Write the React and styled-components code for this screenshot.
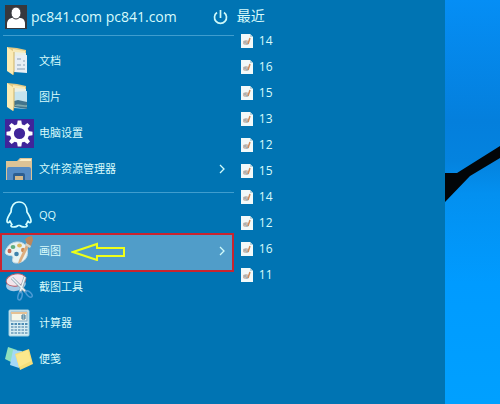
import React from 'react';
import styled, { createGlobalStyle } from 'styled-components';

const GlobalStyle = createGlobalStyle`
    * {
        box-sizing: border-box;
    }

    body {
        margin: 0;
        background-color: #0074b3;
        color: #d8fbfb;
        font-family: "Open Sans", "Noto Sans CJK SC", sans-serif;
    }

    button {
        border: none;
        padding: 0;
        background: none;
        color: inherit;
        font-family: inherit;
        cursor: pointer;
    }
`;

const UserIcon = () => (
    <svg width="22" height="24" viewBox="0 0 22 24" aria-hidden="true">
        <rect width="22" height="24" fill="#37383d" />
        <path d="M2 23v-4c0-4 3-6 5-6h8c3 0 5 2 5 6v4z" fill="#fff" />
        <ellipse cx="11" cy="8" rx="5" ry="6" fill="#fff" stroke="#37383d" />
    </svg>
);

const PowerIcon = () => (
    <svg width="15" height="16" viewBox="0 0 15 16" fill="none" stroke="#cdf8f8" strokeWidth="1.7" aria-hidden="true">
        <path d="M4 3.500a6 6 0 1 0 7 0M7.500 1v8" />
    </svg>
);

const FolderIcon = ({ picture }) => (
    <svg width="28" height="30" viewBox="0 0 28 30" aria-hidden="true">
        <path d="M2 1l10 1 9 2v17H2z" fill="#e3c983" />
        <path d="M8 3l12 2v18H8z" fill="#f6e9b8" />
        <path d="M9 6l12 1v18H9z" fill="#e9efe6" />
        <path d="M9 10l13-1v18l-13-1z" fill={picture ? '#c5e3ee' : '#e8eef4'} />
        {picture ? (
            <>
                <path d="M9 19l4-1 9 2v7l-13-2z" fill="#43748c" />
                <path d="M10 23c4-2 7 1 12 0v2l-12-1z" fill="#7fa9ad" />
            </>
        ) : (
            <path d="M12 13h4m2 2h2m-8 4h4m2 0h2m-8 4h8" stroke="#8a9fb4" />
        )}
        <path d="M2 1l7 5v19l-1 4-6-4z" fill="#fbebb4" />
        <path d="M9 6v19l-1 4" fill="none" stroke="#cdb36a" />
    </svg>
);

const teeth = [0, 45, 90, 135, 180, 225, 270, 315];

const GearIcon = () => (
    <svg width="29" height="29" viewBox="0 0 29 29" aria-hidden="true">
        <rect width="29" height="29" fill="#40259a" />
        <circle cx="14.5" cy="14.5" r="7.6" fill="none" stroke="#fff" strokeWidth="4" />
        {teeth.map((angle) => (
            <path key={angle} d="M12 6l.7-4.500h3.600l.7 4.500z" fill="#fff" transform={`rotate(${angle} 14.5 14.5)`} />
        ))}
    </svg>
);

const ExplorerIcon = () => (
    <svg width="28" height="24" viewBox="0 0 28 24" aria-hidden="true">
        <path d="M1 4h11l3-3h12v22H1z" fill="#dcc396" />
        <path d="M14 4l2-2h10v2z" fill="#faedc7" />
        <path d="M2 12q0-2 2-2h20q2 0 2 2v11H2z" fill="#548bc4" />
        <path d="M8 23v-5q0-2 2-2h8q2 0 2 2v5z" fill="#2c5e91" />
        <path d="M10 19h8v4h-8z" fill="#d4b88a" />
    </svg>
);

const QQIcon = () => (
    <svg width="28" height="30" viewBox="0 0 28 30" fill="none" stroke="#d5ffff" strokeWidth="1.7" strokeLinejoin="round" aria-hidden="true">
        <path d="M14 2C9 2 6 6 6 12c-2 3-4 6-4 9 0 2.500 2 2 3 0 .5 1.500 1 2.500 2 3.500-2 1-1 2.500 1 2.500 2 0 4 0 5-1.500h2c1 1.500 3 1.500 5 1.500s3-1.500 1-2.500c1-1 1.500-2 2-3.500 1 2 3 2.500 3 0 0-3-2-6-4-9 0-6-3-10-8-10z" />
    </svg>
);

const PaintIcon = () => (
    <svg width="30" height="30" viewBox="0 0 30 30" aria-hidden="true">
        <path d="M3 12c3-6 12-8 17-4 4 3 4 8 3 12-2 5-6 7-11 7-4 0-4-3-3-5 0-3-2-2-5-3-4-1-3-4-1-7z" fill="#e9f3f1" stroke="#c8dbe2" />
        <ellipse cx="5.500" cy="15" rx="2" ry="2.200" fill="#c36c58" />
        <ellipse cx="9" cy="11" rx="2.400" ry="1.900" fill="#5fae7e" />
        <ellipse cx="15.500" cy="9.500" rx="2.400" ry="1.900" fill="#dbb75c" />
        <ellipse cx="19" cy="14" rx="2" ry="2.300" fill="#cf8c52" />
        <circle cx="12.500" cy="18" r="2.300" fill="#3f83ac" />
        <path d="M26 8L17 26l-3 2 1-4 8-17z" fill="#dcae80" />
        <path d="M21 3l3-2 4-1 1 4-2 6-4-2z" fill="#bc875d" />
        <path d="M22 7l5 3-1 2-5-3z" fill="#d6d2c4" />
    </svg>
);

const SnipIcon = () => (
    <svg width="30" height="30" viewBox="0 0 30 30" aria-hidden="true">
        <ellipse cx="12" cy="13" rx="10" ry="6" fill="#a9cbe6" transform="rotate(-12 12 13)" />
        <ellipse cx="12" cy="8" rx="10" ry="6" fill="#f3e6ec" stroke="#b85a65" transform="rotate(-10 12 8)" />
        <path d="M8 6l14 14M21 5l-5 16" stroke="#91a8b6" strokeWidth="3" />
        <path d="M8 6l13 13M21 5l-5 15" stroke="#eef4f4" strokeWidth="1.500" />
        <ellipse cx="16" cy="24" rx="2" ry="4" fill="none" stroke="#4d9bd5" strokeWidth="1.500" transform="rotate(15 16 24)" />
        <ellipse cx="25" cy="22" rx="2" ry="4" fill="none" stroke="#4d9bd5" strokeWidth="1.500" transform="rotate(-45 25 22)" />
    </svg>
);

const keys = [0, 1, 2, 3, 4].flatMap((col) => [0, 1, 2, 3].map((row) => [col, row]));

const CalculatorIcon = () => (
    <svg width="22" height="28" viewBox="0 0 22 28" aria-hidden="true">
        <rect x="1" y="1" width="20" height="26" rx="1" fill="#d8edf2" stroke="#a0cfe1" />
        <rect x="3" y="3" width="16" height="9" fill="#f6f6e9" stroke="#7fa9c4" />
        <path d="M3 4h16" stroke="#e6c194" strokeWidth="2" />
        <path d="M14 6h3v4h-3zM14 8h3" fill="none" stroke="#3c789b" />
        {keys.map(([col, row]) => (
            <rect key={`${col}-${row}`} x={3 + col * 3.500} y={14 + row * 3} width="2.500" height="2" fill={row === 0 ? '#4f8db5' : '#86afc8'} />
        ))}
    </svg>
);

const NotesIcon = () => (
    <svg width="30" height="26" viewBox="0 0 30 26" aria-hidden="true">
        <path d="M4 1l9 3-2 14-10-5z" fill="#8fe0bd" />
        <path d="M9 4l9 1-3 17-9-3z" fill="#a3d8f6" />
        <path d="M11 8l14-5 4 15-13 6z" fill="#f5de79" />
        <path d="M12 9l12-5 3 11-12 6z" fill="#fbe88d" />
    </svg>
);

const ChevronIcon = () => (
    <svg width="6" height="10" viewBox="0 0 6 10" fill="none" stroke="#d0fbfb" strokeWidth="1.300" aria-hidden="true">
        <path d="M1 1l4 4-4 4" />
    </svg>
);

const FileIcon = () => (
    <svg width="12" height="14" viewBox="0 0 12 14" aria-hidden="true">
        <path d="M0 0h9l3 3v11H0z" fill="#f2f9f9" />
        <path d="M9 0v3h3" fill="#b8d3dc" />
        <path d="M2 7l3-1 3 1v3l-4 1-2-1z" fill="#c9bbb2" />
        <path d="M9 4L7 10" stroke="#cf8c5c" strokeWidth="1.500" />
        <path d="M3 8h2M5 10h2" stroke="#86a6b5" />
    </svg>
);

const PointerArrow = () => (
    <Arrow width="56" height="20" viewBox="0 0 56 20" aria-hidden="true">
        <path d="M2 11L26 3v4h27v8H26v4z" fill="none" stroke="#eeff18" strokeWidth="2" />
    </Arrow>
);

const places = [
    { label: '文档', icon: <FolderIcon /> },
    { label: '图片', icon: <FolderIcon picture /> },
    { label: '电脑设置', icon: <GearIcon /> },
    { label: '文件资源管理器', icon: <ExplorerIcon />, more: true },
];

const programs = [
    { label: 'QQ', icon: <QQIcon /> },
    { label: '画图', icon: <PaintIcon />, more: true, active: true },
    { label: '截图工具', icon: <SnipIcon /> },
    { label: '计算器', icon: <CalculatorIcon /> },
    { label: '便笺', icon: <NotesIcon /> },
];

const recent = [14, 16, 15, 13, 12, 15, 14, 12, 16, 11];

function MenuList({ items }) {
    return (
        <List>
            {items.map(({ label, icon, more, active }) => (
                <li key={label}>
                    <MenuButton type="button" $active={active}>
                        <IconBox>{icon}</IconBox>
                        <span>{label}</span>
                        {active && <PointerArrow />}
                        {more && <More><ChevronIcon /></More>}
                    </MenuButton>
                </li>
            ))}
        </List>
    );
}

function App() {
    return (
        <Screen>
            <GlobalStyle />
            <StartMenu>
                <Programs>
                    <Header>
                        <UserButton type="button">
                            <UserIcon />
                            <span>pc841.com pc841.com</span>
                        </UserButton>
                        <button type="button" aria-label="电源">
                            <PowerIcon />
                        </button>
                    </Header>
                    <Divider />
                    <MenuList items={places} />
                    <Divider />
                    <MenuList items={programs} />
                </Programs>
                <Recent>
                    <RecentTitle>最近</RecentTitle>
                    <List>
                        {recent.map((name, index) => (
                            <li key={index}>
                                <RecentButton type="button">
                                    <FileIcon />
                                    <span>{name}</span>
                                </RecentButton>
                            </li>
                        ))}
                    </List>
                </Recent>
            </StartMenu>
            <Wallpaper viewBox="0 0 55 404" preserveAspectRatio="xMinYMin slice" aria-hidden="true">
                <defs>
                    <linearGradient id="sky" x1="0" y1="0" x2="0" y2="1">
                        <stop offset="0" stopColor="#058ef5" />
                        <stop offset="0.300" stopColor="#047fdc" />
                        <stop offset="0.400" stopColor="#0483df" />
                        <stop offset="0.480" stopColor="#0390f0" />
                        <stop offset="0.700" stopColor="#009bff" />
                        <stop offset="1" stopColor="#00a0ff" />
                    </linearGradient>
                </defs>
                <rect width="55" height="404" fill="url(#sky)" />
                <path d="M0 173h12l43-27v12L25 176 0 202z" fill="#020508" />
            </Wallpaper>
        </Screen>
    );
}

const Screen = styled.div`
    display: grid;
    grid-template-columns: 89% 11%;
    min-height: 100vh;
`;

const StartMenu = styled.main`
    display: grid;
    grid-template-columns: 53% 47%;
    background-color: #0074b3;
`;

const Programs = styled.nav`
    min-width: 0;
`;

const Header = styled.header`
    display: flex;
    align-items: center;
    justify-content: space-between;
    height: 35px;
    padding: 0 8px 2px 5px;

    svg {
        display: block;
    }
`;

const UserButton = styled.button`
    display: flex;
    align-items: center;
    gap: 4px;
    font-size: 14px;
    line-height: 20px;
    white-space: nowrap;
`;

const Divider = styled.hr`
    height: 1px;
    margin: 0 2px 7px 3px;
    border: none;
    background-color: #3f9dce;
`;

const List = styled.ul`
    margin: 0;
    padding: 0;
    list-style: none;

    & + ${Divider} {
        margin-top: 5px;
        margin-bottom: 4px;
    }
`;

const MenuButton = styled.button`
    position: relative;
    z-index: 0;
    display: flex;
    align-items: center;
    width: 100%;
    height: 36px;
    padding: 0 11px 0 4px;
    font-size: 11px;
    line-height: 16px;
    text-align: left;
    white-space: nowrap;

    /* marker frame, hangs a little below the row */
    &::before {
        content: "";
        display: ${({ $active }) => ($active ? 'block' : 'none')};
        position: absolute;
        z-index: -1;
        inset: 0 2px -3px 0;
        border: 2px solid #c9242f;
        background-color: #509dc9;
    }
`;

const IconBox = styled.span`
    display: flex;
    align-items: center;
    justify-content: center;
    flex: none;
    width: 30px;
    margin-right: 5px;
`;

const Arrow = styled.svg`
    flex: none;
    margin-left: 10px;
`;

const More = styled.span`
    display: flex;
    margin-left: auto;
`;

const Recent = styled.section`
    min-width: 0;
    padding: 6px 4px 0 1px;
`;

const RecentTitle = styled.h2`
    margin: 0 0 2px;
    font-size: 14px;
    font-weight: 400;
    line-height: 20px;
`;

const RecentButton = styled.button`
    display: flex;
    align-items: center;
    gap: 6px;
    width: 100%;
    height: 26px;
    padding-left: 4px;
    font-size: 12px;
    font-weight: 500;
    line-height: 16px;
`;

const Wallpaper = styled.svg`
    display: block;
    width: 100%;
    height: 100%;
`;

export default App;
